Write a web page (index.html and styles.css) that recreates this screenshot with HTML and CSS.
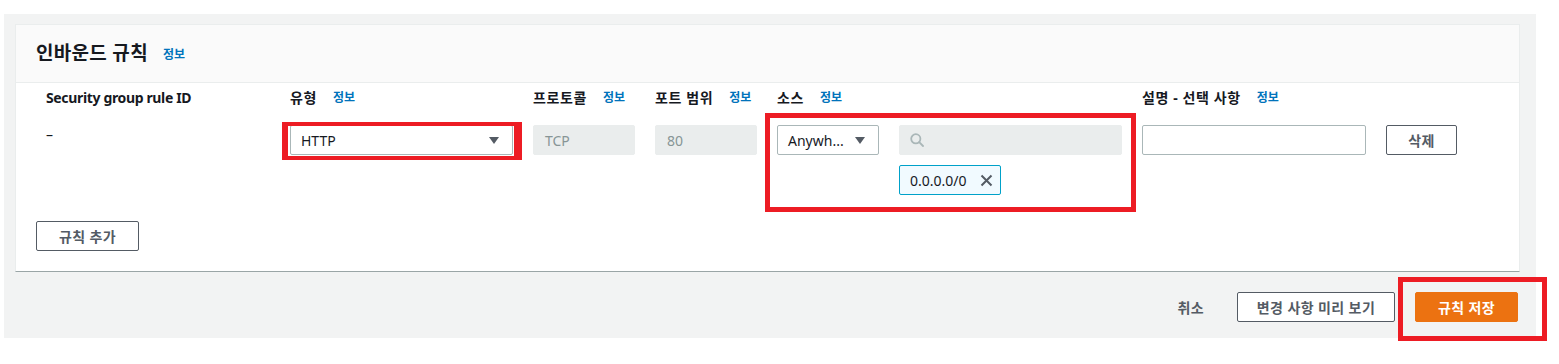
FILE: index.html
```html
<!DOCTYPE html>
<html lang="ko">
<head>
<meta charset="utf-8">
<title>인바운드 규칙</title>
<link rel="stylesheet" href="styles.css">
</head>
<body>
<div class="page">
  <section class="panel">
    <header class="panel-header">
      <h2 class="panel-title">인바운드 규칙</h2>
      <a class="info">정보</a>
    </header>
    <div class="panel-body">
      <div class="rules">
        <div class="label latin c1">Security group rule ID</div>
        <div class="label c2">유형<a class="info">정보</a></div>
        <div class="label c3">프로토콜<a class="info">정보</a></div>
        <div class="label c4">포트 범위<a class="info">정보</a></div>
        <div class="label c5">소스<a class="info">정보</a></div>
        <div class="label c7">설명 - 선택 사항<a class="info">정보</a></div>

        <div class="cell c1 dash">–</div>
        <div class="cell c2">
          <div class="select">
            <span>HTTP</span>
            <svg class="caret" width="10" height="7" viewBox="0 0 10 7"><path d="M0 0h10L5 7z" fill="#545b64"/></svg>
          </div>
        </div>
        <div class="cell c3"><div class="input disabled">TCP</div></div>
        <div class="cell c4"><div class="input disabled">80</div></div>
        <div class="cell c5">
          <div class="select">
            <span>Anywh...</span>
            <svg class="caret" width="10" height="7" viewBox="0 0 10 7"><path d="M0 0h10L5 7z" fill="#545b64"/></svg>
          </div>
        </div>
        <div class="cell c6">
          <div class="input disabled search">
            <svg width="14" height="14" viewBox="0 0 14 14"><circle cx="5.8" cy="5.8" r="4.6" fill="none" stroke="#aab7b8" stroke-width="1.8"/><path d="M9.2 9.2l3.8 3.8" stroke="#aab7b8" stroke-width="1.8" stroke-linecap="round"/></svg>
          </div>
        </div>
        <div class="cell c7"><div class="input"></div></div>
        <div class="cell c8"><button class="btn small">삭제</button></div>

        <div class="cell c6 token-row">
          <div class="token">
            <span>0.0.0.0/0</span>
            <svg width="13" height="13" viewBox="0 0 13 13"><path d="M1.5 1.5l10 10M11.5 1.5l-10 10" stroke="#545b64" stroke-width="2"/></svg>
          </div>
        </div>
      </div>
      <button class="btn add">규칙 추가</button>
    </div>
  </section>
  <footer class="footer">
    <button class="btn link">취소</button>
    <button class="btn preview">변경 사항 미리 보기</button>
    <button class="btn primary">규칙 저장</button>
  </footer>
</div>
<div class="mark mark-type"></div>
<div class="mark mark-source"></div>
<div class="mark mark-save"></div>
</body>
</html>
```
FILE: styles.css
```css
* { box-sizing: border-box; }
html, body { margin: 0; padding: 0; background: #fff; }
body {
  font-family: "Noto Sans", "Noto Sans CJK KR", sans-serif;
  font-size: 14px;
  color: #16191f;
  width: 1559px;
  height: 364px;
  position: relative;
  overflow: hidden;
}
.page {
  margin: 14px 0 0 4px;
  width: 1532px;
  height: 324px;
  background: #f2f3f3;
  padding: 10px 16px 0 11px;
}
.panel {
  background: #fff;
  border: 1px solid #eaeded;
  border-bottom: 1px solid #9aa5a6;
  height: 248px;
  display: flex;
  flex-direction: column;
}
.panel-header {
  background: #fafafa;
  border-bottom: 1px solid #eaeded;
  height: 59px;
  display: flex;
  align-items: center;
  padding: 0 20px;
}
.panel-title {
  margin: 0;
  font-size: 19px;
  font-weight: 700;
  line-height: 24px;
  letter-spacing: 0.3px;
  margin-top: -1px;
}
.info {
  color: #0073bb;
  font-size: 12px;
  font-weight: 700;
  margin-left: 10px;
  line-height: 16px;
  letter-spacing: 0;
}
.panel-header .info { margin-left: 15px; margin-top: 3px; }
.panel-body {
  padding: 4px 20px 20px 20px;
  flex: 1;
  display: flex;
  flex-direction: column;
}
.rules {
  margin-left: 10px;
  display: grid;
  grid-template-columns: 224px 223px 102px 102px 102px 223px 224px 71px;
  grid-template-rows: 22px 46px 56px;
  column-gap: 20px;
  row-gap: 0;
}
.label {
  grid-row: 1;
  font-weight: 700;
  line-height: 22px;
  white-space: nowrap;
  display: flex;
  align-items: center;
  letter-spacing: 0.6px;
}
.label.latin { letter-spacing: -0.35px; }
.label .info { margin-left: 16px; }
.c1 { grid-column: 1; }
.c2 { grid-column: 2; }
.c3 { grid-column: 3; }
.c4 { grid-column: 4; }
.c5 { grid-column: 5; }
.c6 { grid-column: 6; }
.c7 { grid-column: 7; }
.c8 { grid-column: 8; }
.cell { grid-row: 2; margin-top: 16px; }
.cell.token-row { grid-row: 3; margin-top: 26px; }
.dash { line-height: 20px; font-size: 14px; }
.select {
  height: 30px;
  border: 1px solid #aab7b8;
  border-radius: 2px;
  background: #fff;
  display: flex;
  align-items: center;
  justify-content: space-between;
  padding: 0 13px 0 10px;
  color: #16191f;
}
.input {
  height: 30px;
  border: 1px solid #aab7b8;
  border-radius: 2px;
  background: #fff;
  display: flex;
  align-items: center;
  padding: 0 11px;
}
.input.disabled {
  background: #eaeded;
  border-color: #eaeded;
  color: #879596;
}
.search { padding-left: 10px; }
.token {
  width: 102px;
  height: 30px;
  margin-top: -16px;
  border: 1px solid #00a1c9;
  background: #f1faff;
  border-radius: 2px;
  display: flex;
  align-items: center;
  justify-content: space-between;
  padding: 0 7px 0 10px;
}
.btn {
  font-family: inherit;
  font-size: 14px;
  font-weight: 700;
  height: 30px;
  border: 1px solid #545b64;
  border-radius: 2px;
  background: #fff;
  color: #545b64;
  padding: 0 20px;
  letter-spacing: 0.4px;
  cursor: pointer;
}
.btn.small { width: 71px; padding: 0; }
.btn.add { width: 103px; padding: 0; margin-top: 10px; align-self: flex-start; }
.footer {
  display: flex;
  justify-content: flex-end;
  align-items: center;
  padding: 20px 2px 0 0;
  gap: 20px;
}
.btn.link { border-color: transparent; background: transparent; margin-right: -8px; }
.btn.preview { width: 158px; padding: 0; }
.btn.primary {
  width: 103px;
  padding: 0;
  background: #ec7211;
  border-color: #ec7211;
  color: #fff;
}
.mark {
  position: absolute;
  border: 5px solid #ed1c24;
  pointer-events: none;
}
.mark-type {
  left: 282px; top: 122px; width: 240px; height: 38px;
  border-width: 4px 8px 4px 6px;
}
.mark-source {
  left: 765px; top: 113px; width: 371px; height: 99px;
}
.mark-save {
  left: 1398px; top: 277px; width: 149px; height: 64px;
}
```
